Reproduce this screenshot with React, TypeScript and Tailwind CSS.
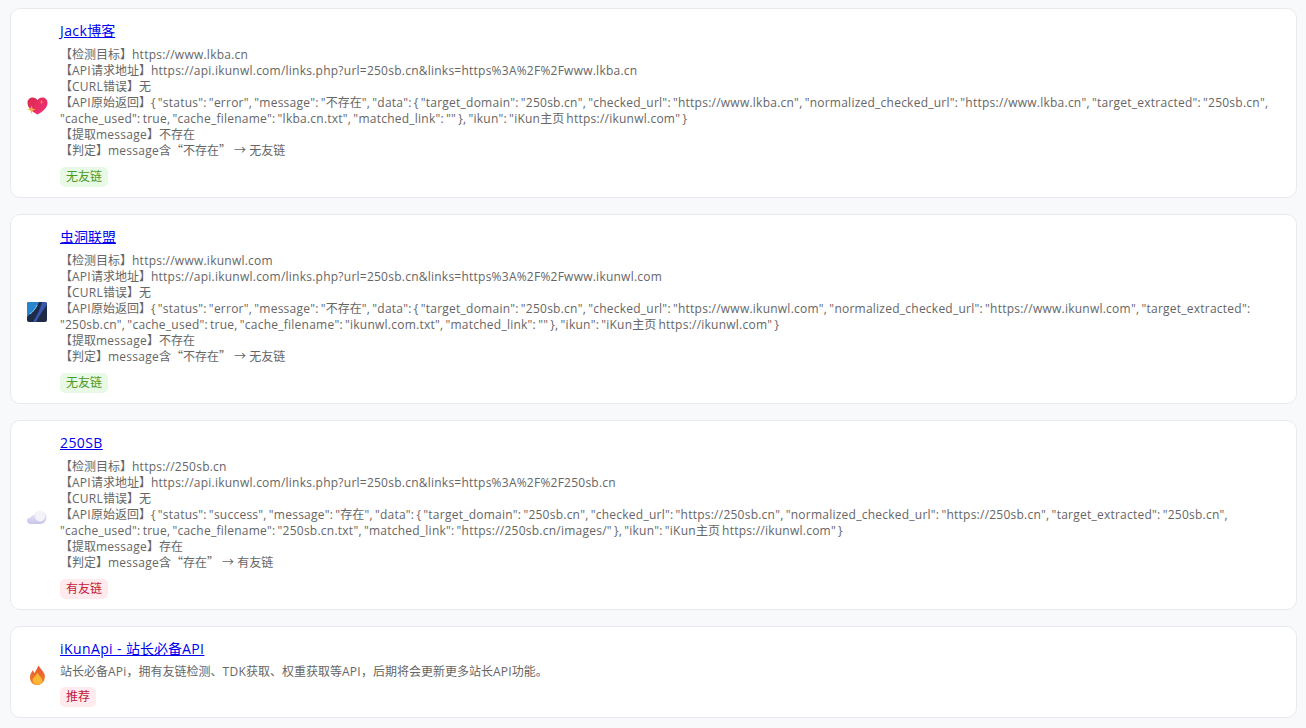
const FONT = "font-['Open_Sans','Noto_Sans_CJK_SC',sans-serif]";

function Heart() {
  return (
    <svg width="21" height="18" viewBox="0 0 21 18">
      <defs>
        <linearGradient id="h" x1="0" y1="0" x2="1" y2="1">
          <stop offset="0" stopColor="#d92c4a" />
          <stop offset="1" stopColor="#f5307f" />
        </linearGradient>
      </defs>
      <path d="M10.500 17.500C5.500 15 0.500 11 0.500 5.800C0.500 2.500 3 0.500 5.800 0.500C7.800 0.500 9.500 1.500 10.500 3.300C11.500 1.500 13.200 0.500 15.200 0.500C18 0.500 20.500 2.500 20.500 5.800C20.500 11 15.500 15 10.500 17.500Z" fill="url(#h)" />
      <path d="M4.500 8.500L5.500 11.500L8.500 12.500L5.500 13.500L4.500 17L3.500 13.500L0.500 12.500L3.500 11.500Z" fill="#f8b13c" />
      <path d="M14.500 2.500L15.100 4.400L17 5L15.100 5.600L14.500 7.500L13.900 5.600L12 5L13.900 4.400Z" fill="#f77a5a" />
    </svg>
  );
}

function Wormhole() {
  return (
    <svg width="20" height="20" viewBox="0 0 20 20">
      <rect x="0" y="0" width="20" height="20" rx="2" fill="#1f2a44" />
      <path d="M2 0H12C10 5 6 10 2 13L0 15V2Q0 0 2 0Z" fill="#2a86cc" />
      <path d="M15 0H17C18 0 20 0 20 3C16 8 12 14 9 20H6C10 14 13 7 15 0Z" fill="#3557ad" />
      <path d="M3 12C6 10 9 6 10 3" stroke="#7fd0f5" strokeWidth="1" fill="none" />
    </svg>
  );
}

function Cloud() {
  return (
    <svg width="22" height="16" viewBox="0 0 22 16">
      <defs>
        <linearGradient id="c" x1="0" y1="0" x2="0" y2="1">
          <stop offset="0" stopColor="#f2f0f8" />
          <stop offset="1" stopColor="#c6c3ec" />
        </linearGradient>
      </defs>
      <path d="M5 14C2.500 14 1 12.500 1 10.500C1 8.500 2.500 7.500 4.500 7.500C5.500 5.500 7 5 8 5.200C9 2.500 11.500 1 14 1C17.500 1 20.500 4 20.500 7.500C20.500 11 18 14 14 14Z" fill="url(#c)" />
      <circle cx="14" cy="6.500" r="5" fill="#f3f3f8" />
    </svg>
  );
}

function Flame() {
  return (
    <svg width="17" height="21" viewBox="0 0 18 22">
      <defs>
        <linearGradient id="f" x1="0" y1="0" x2="0" y2="1">
          <stop offset="0" stopColor="#e8502c" />
          <stop offset="1" stopColor="#f08a2a" />
        </linearGradient>
      </defs>
      <path d="M10 0.500C11 3 15 6 16.500 10C18 15 14.500 21 9 21C3.500 21 1 17 1 13C1 9.500 3 7.500 4 5.500C5 7 5.500 8 6 8.500C7 6 9 3.500 10 0.500Z" fill="url(#f)" />
      <path d="M9 8C10 11 14 13 14 16C14 19 11.500 20.500 9 20.500C6.500 20.500 4 19 4 16C4 13 7.500 11 9 8Z" fill="#fbb733" />
    </svg>
  );
}

function Badge({ tone, children }: { tone: "green" | "red"; children: string }) {
  return (
    <span
      className={
        tone === "green"
          ? "inline-block rounded-[5px] bg-[#e8f9e6] px-1.5 text-xs leading-5 text-[#4a9a28]"
          : "inline-block rounded-[5px] bg-[#ffebee] px-1.5 text-xs leading-5 text-[#c2183a]"
      }
    >
      {children}
    </span>
  );
}

function Runs({ text, latin }: { text: string; latin: string }) {
  const parts = text.split(/([“”→]|[\x20-\x7e]+)/).filter(Boolean);
  return (
    <>
      {parts.map((p, i) => {
        if (/^[“”→]$/.test(p)) {
          return (
            <span key={i} lang="zh-CN" className="font-['Noto_Sans_CJK_SC'] leading-3">
              {p}
            </span>
          );
        }
        if (p !== " " && /^[\x20-\x7e]+$/.test(p)) {
          return (
            <span key={i} className={latin}>
              {p}
            </span>
          );
        }
        return <span key={i}>{p}</span>;
      })}
    </>
  );
}

type Item = {
  icon: React.ReactNode;
  title: string;
  lines: string[];
  badge: string;
  tone: "green" | "red";
  compact?: boolean;
};

const items: Item[] = [
  {
    icon: <Heart />,
    title: "Jack博客",
    lines: [
      "【检测目标】https://www.lkba.cn",
      "【API请求地址】https://api.ikunwl.com/links.php?url=250sb.cn&links=https%3A%2F%2Fwww.lkba.cn",
      "【CURL错误】无",
      '【API原始返回】{ "status": "error", "message": "不存在", "data": { "target_domain": "250sb.cn", "checked_url": "https://www.lkba.cn", "normalized_checked_url": "https://www.lkba.cn", "target_extracted": "250sb.cn", "cache_used": true, "cache_filename": "lkba.cn.txt", "matched_link": "" }, "ikun": "iKun主页 https://ikunwl.com" }',
      "【提取message】不存在",
      "【判定】message含“不存在” → 无友链",
    ],
    badge: "无友链",
    tone: "green",
  },
  {
    icon: <Wormhole />,
    title: "虫洞联盟",
    lines: [
      "【检测目标】https://www.ikunwl.com",
      "【API请求地址】https://api.ikunwl.com/links.php?url=250sb.cn&links=https%3A%2F%2Fwww.ikunwl.com",
      "【CURL错误】无",
      '【API原始返回】{ "status": "error", "message": "不存在", "data": { "target_domain": "250sb.cn", "checked_url": "https://www.ikunwl.com", "normalized_checked_url": "https://www.ikunwl.com", "target_extracted": "250sb.cn", "cache_used": true, "cache_filename": "ikunwl.com.txt", "matched_link": "" }, "ikun": "iKun主页 https://ikunwl.com" }',
      "【提取message】不存在",
      "【判定】message含“不存在” → 无友链",
    ],
    badge: "无友链",
    tone: "green",
  },
  {
    icon: <Cloud />,
    title: "250SB",
    lines: [
      "【检测目标】https://250sb.cn",
      "【API请求地址】https://api.ikunwl.com/links.php?url=250sb.cn&links=https%3A%2F%2F250sb.cn",
      "【CURL错误】无",
      '【API原始返回】{ "status": "success", "message": "存在", "data": { "target_domain": "250sb.cn", "checked_url": "https://250sb.cn", "normalized_checked_url": "https://250sb.cn", "target_extracted": "250sb.cn", "cache_used": true, "cache_filename": "250sb.cn.txt", "matched_link": "https://250sb.cn/images/" }, "ikun": "iKun主页 https://ikunwl.com" }',
      "【提取message】存在",
      "【判定】message含“存在” → 有友链",
    ],
    badge: "有友链",
    tone: "red",
  },
  {
    icon: <Flame />,
    title: "iKunApi - 站长必备API",
    lines: ["站长必备APi，拥有友链检测、TDK获取、权重获取等API，后期将会更新更多站长API功能。"],
    badge: "推荐",
    tone: "red",
    compact: true,
  },
];

function Card({ item }: { item: Item }) {
  return (
    <div className="flex items-center rounded-[10px] border border-[#e8eaee] bg-white pl-[15px] pr-6 pt-3 pb-2.5">
      <div className="flex w-[22px] shrink-0 items-center justify-center pt-1">{item.icon}</div>
      <div className="ml-3 min-w-0 flex-1">
        <div className="text-sm leading-5">
          <a href="#" className="text-[#0000ee] underline">
            <Runs text={item.title} latin="tracking-[0.4px]" />
          </a>
        </div>
        <div className={item.compact ? "mt-[5px] text-xs leading-4 text-[#666666]" : "mt-1.5 text-xs leading-4 text-[#666666]"}>
          {item.lines.map((l, i) => (
            <div key={i}>
              <Runs text={l} latin="tracking-[0.24px] [word-spacing:-1.2px]" />
            </div>
          ))}
        </div>
        <div className={item.compact ? "mt-[7px] flex" : "mt-2 flex"}>
          <Badge tone={item.tone}>{item.badge}</Badge>
        </div>
      </div>
    </div>
  );
}

export default function App() {
  return (
    <div className={`flex h-[728px] flex-col gap-4 overflow-hidden bg-[#f8f9fb] pl-2.5 pr-[9px] pt-2 ${FONT}`}>
      {items.map((it) => (
        <Card key={it.title} item={it} />
      ))}
    </div>
  );
}
